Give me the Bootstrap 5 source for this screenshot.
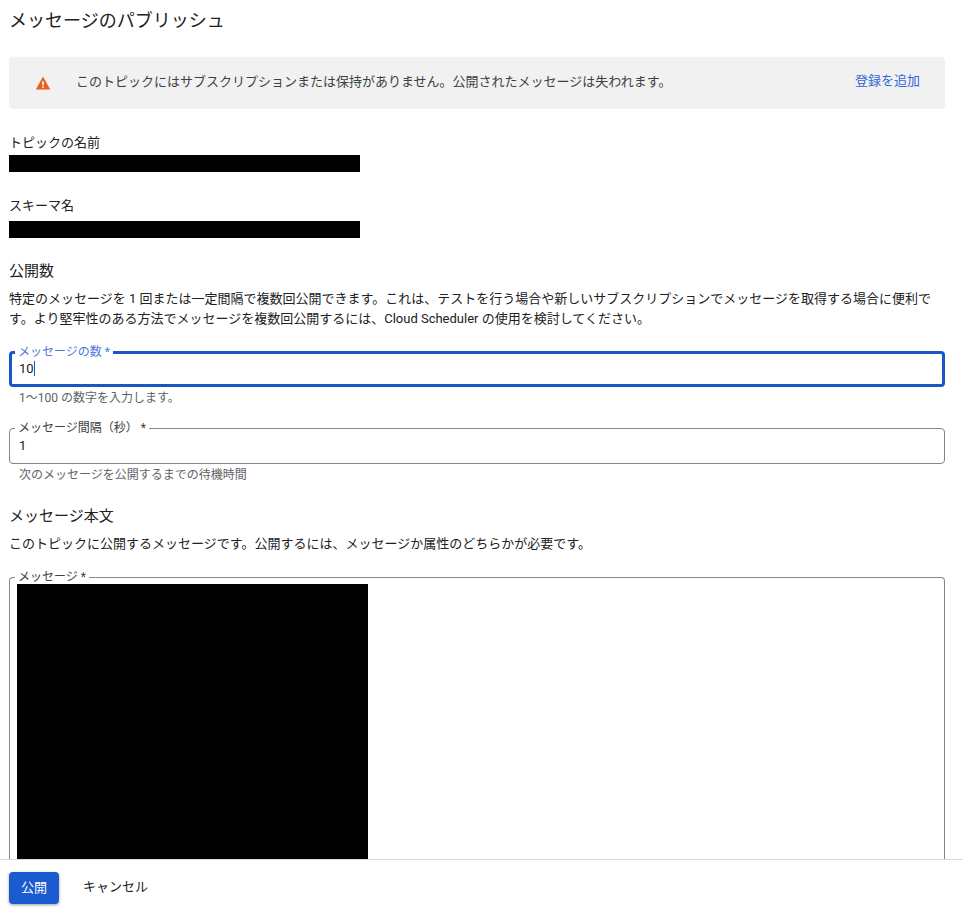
<!DOCTYPE html>
<html lang="ja">
<head>
<meta charset="utf-8">
<title>メッセージのパブリッシュ</title>
<link href="https://cdn.jsdelivr.net/npm/bootstrap@5.3.0/dist/css/bootstrap.min.css" rel="stylesheet">
<style>
html,body{height:100%;overflow:hidden}
body{font-family:Roboto,"Noto Sans CJK JP",sans-serif;font-size:13px;line-height:20px;color:#202124;background:#fff}
.page-shell{height:910px}
.page-main{padding:0 18px 0 9px;overflow:hidden;min-height:0}
.page-title{font-size:18px;font-weight:400;line-height:24px;margin:9px 0 0}
.notice{background:#f1f1f1;border-radius:4px;height:52px;margin-top:24px;padding:0 25px 2px 26px;color:#3c4043}
.notice-icon{width:16px;height:16px;margin-right:25px;margin-top:2px}
.notice-link{color:#3367d6;text-decoration:none;margin-bottom:2px}
.meta-label{margin:24px 0 2px;line-height:20px}
.redact{background:#000;width:351px;height:17px}
.redact-gap{margin-top:5px}
.sec-title{font-size:15px;font-weight:400;line-height:20px;margin:23px 0 0}
.sec-desc{margin:8px 0 0;font-size:13px;line-height:20px}
.field-box{position:relative;border:1px solid #80868b;border-radius:4px;padding:6px 9px;height:36px;line-height:22px;font-size:13px;margin-top:22px}
.field-box.is-active{border:3px solid #1a56c4;padding:4px 7px;height:36px}
.field-label{position:absolute;left:5px;top:-8px;background:#fff;padding:0 3px;font-size:12px;line-height:14px;color:#3c4043}
.is-active .field-label{left:3px;top:-9px;color:#4b79dc}
.caret-bar{display:inline-block;width:1px;height:15px;background:#1a56c4;vertical-align:-3px}
.field-hint{font-size:12px;line-height:16px;color:#5f6368;padding-left:10px;margin-top:3px}
.text-area-box{position:relative;border:1px solid #80868b;border-bottom:0;border-radius:4px 4px 0 0;height:300px;padding:6px 7px;margin-top:23px}
.redact-big{background:#000;width:351px;height:280px}
.page-foot{border-top:1px solid #dadce0;height:51px;padding:12px 9px 0;background:#fff}
.btn-go{background:#1a5ccf;color:#fff;border:0;border-radius:4px;width:50px;height:32px;font-size:13px;line-height:32px;padding:0;box-shadow:0 1px 3px rgba(60,64,67,.5)}
.btn-go:hover{background:#1a5ccf;color:#fff}
.btn-off{background:none;border:0;color:#202124;font-size:13px;line-height:30px;padding:0;margin-left:24px}
</style>
</head>
<body>
<div class="page-shell d-flex flex-column">
  <main class="page-main flex-grow-1">
    <h1 class="page-title">メッセージのパブリッシュ</h1>
    <div class="notice d-flex align-items-center">
      <svg class="notice-icon flex-shrink-0" viewBox="0 0 16 16" aria-hidden="true"><path d="M8 1.6 15.2 14.4H.8Z" fill="#e8601c"/><rect x="7.2" y="6.2" width="1.6" height="4.2" fill="#fff"/><rect x="7.2" y="11.2" width="1.6" height="1.6" fill="#fff"/></svg>
      <span class="flex-grow-1">このトピックにはサブスクリプションまたは保持がありません。公開されたメッセージは失われます。</span>
      <a class="notice-link" href="#">登録を追加</a>
    </div>

    <p class="meta-label">トピックの名前</p>
    <div class="redact"></div>
    <p class="meta-label">スキーマ名</p>
    <div class="redact redact-gap"></div>

    <h2 class="sec-title">公開数</h2>
    <p class="sec-desc">特定のメッセージを 1 回または一定間隔で複数回公開できます。これは、テストを行う場合や新しいサブスクリプションでメッセージを取得する場合に便利です。より堅牢性のある方法でメッセージを複数回公開するには、Cloud Scheduler の使用を検討してください。</p>

    <div class="field-box is-active">
      <span class="field-label">メッセージの数 *</span>10<span class="caret-bar"></span>
    </div>
    <div class="field-hint">1〜100 の数字を入力します。</div>

    <div class="field-box">
      <span class="field-label">メッセージ間隔（秒） *</span>1
    </div>
    <div class="field-hint">次のメッセージを公開するまでの待機時間</div>

    <h2 class="sec-title">メッセージ本文</h2>
    <p class="sec-desc">このトピックに公開するメッセージです。公開するには、メッセージか属性のどちらかが必要です。</p>

    <div class="text-area-box">
      <span class="field-label">メッセージ *</span>
      <div class="redact-big"></div>
    </div>
  </main>
  <footer class="page-foot flex-shrink-0 d-flex align-items-start">
    <button class="btn btn-go" type="button">公開</button>
    <button class="btn btn-off" type="button">キャンセル</button>
  </footer>
</div>
<script src="https://cdn.jsdelivr.net/npm/bootstrap@5.3.0/dist/js/bootstrap.bundle.min.js"></script>
</body>
</html>
